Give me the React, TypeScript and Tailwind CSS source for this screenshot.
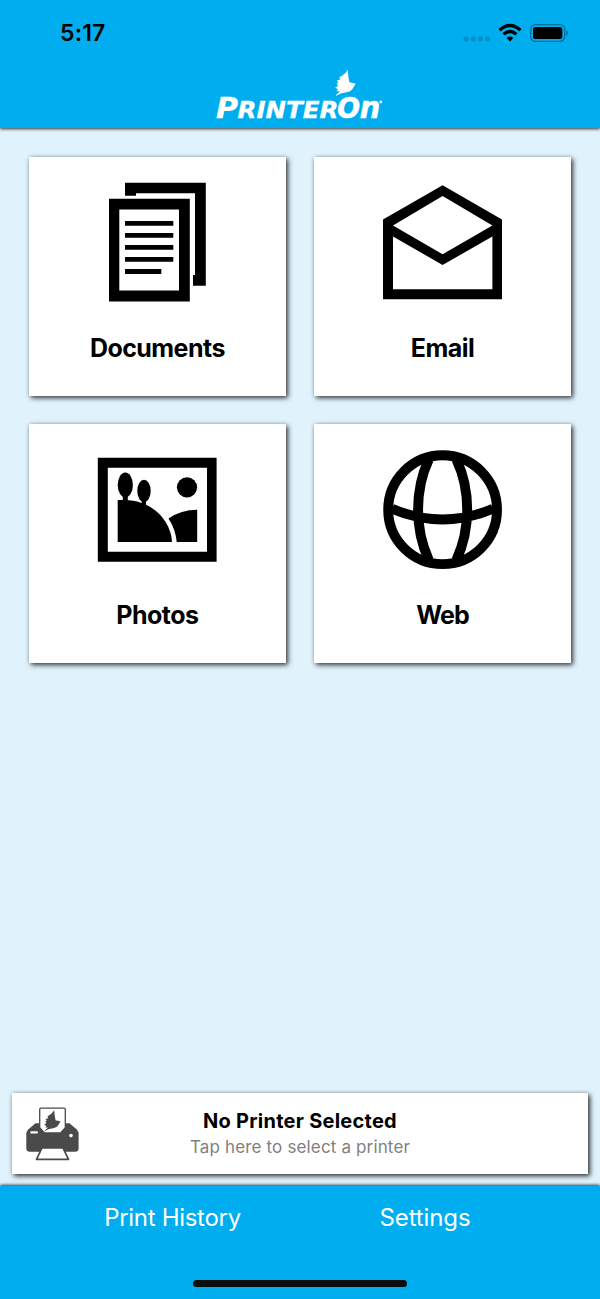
import type { ReactNode } from "react";

const BIRD =
  "M347.8 69.8Q348 76 349.4 82.3L355.8 83.8Q354 86 352.3 89.2Q350.6 91.6 346.5 92.3L341.5 93.2Q338.5 94 335.6 96.2Q336.8 93.6 340 91.6L336.4 91L338.2 89.6L335.2 87.6L338 86L336.8 83.6L338.4 82.4L336.8 80.6L340.2 79.6L339.4 77.2Q345 74.6 347.8 69.8Z";

function StatusBar() {
  return (
    <div className="flex h-[66px] items-center justify-between pl-[60px] pr-[31px]">
      <span className="text-[23px] font-semibold leading-[28px] tracking-[0.2px] text-black">5:17</span>
      <svg className="block" width="108" height="24" viewBox="461 21 108 24">
        <g fill="#008fc8">
          <rect x="463.5" y="36.5" width="5" height="5" rx="1.7" />
          <rect x="470.8" y="36.5" width="5" height="5" rx="1.7" />
          <rect x="478" y="36.5" width="5" height="5" rx="1.7" />
          <rect x="485.2" y="36.5" width="5" height="5" rx="1.7" />
        </g>
        <g fill="none" stroke="#000" strokeWidth="3.3">
          <path d="M499.6 30.2Q510 20.8 520.4 30.2" />
          <path d="M503.6 34.3Q510 28.6 516.4 34.3" />
        </g>
        <path d="M506.6 38Q510 35.2 513.4 38L510 41.4Z" />
        <rect x="530.7" y="24.6" width="34" height="16.8" rx="4.8" fill="none" stroke="#006f9b" strokeWidth="1.2" />
        <rect x="533" y="27" width="29.3" height="12" rx="2.6" />
        <path d="M566.2 30.2Q568 31 568 33Q568 35 566.2 35.8Z" fill="#006f9b" />
      </svg>
    </div>
  );
}

function Logo() {
  return (
    <svg className="block overflow-visible" width="170" height="54" viewBox="215 68 170 54" fill="#fff">
      <g fontFamily="DejaVu Sans, sans-serif" fontWeight="700" fontStyle="italic" stroke="#fff">
        <text x="216" y="117.6" fontSize="27.5" strokeWidth=".3" textLength="22" lengthAdjust="spacingAndGlyphs">P</text>
        <text x="237.5" y="117.6" fontSize="22.3" strokeWidth=".3" textLength="101" lengthAdjust="spacingAndGlyphs">RINTER</text>
        <text x="337.3" y="117.6" fontSize="28" strokeWidth=".7" textLength="22.7" lengthAdjust="spacingAndGlyphs">O</text>
        <text x="359.7" y="117.6" fontSize="30.5" strokeWidth=".5" textLength="20.5" lengthAdjust="spacingAndGlyphs">n</text>
      </g>
      <circle cx="380.8" cy="102" r="1.4" />
      <path d={BIRD} />
    </svg>
  );
}

function DocumentsIcon() {
  return (
    <svg className="block" width="120" height="120" viewBox="97 182 120 120">
      <path d="M125 182.7H205.8V285.8H193V275H195V193.3H136V195.8H125Z" />
      <path fillRule="evenodd" d="M109 198.7H189.8V301.5H109ZM119.3 209.5V290.5H179V209.5Z" />
      <path d="M125 223.4H173.3M125 235.4H173.3M125 247.4H173.3M125 259.4H173.3M125 271.5H161.3" stroke="#000" strokeWidth="4.8" />
    </svg>
  );
}

function EmailIcon() {
  return (
    <svg className="block" width="120" height="120" viewBox="383 182 120 120">
      <path
        fillRule="evenodd"
        d="M383 219.5L442.6 185.3L502 219.5V299.3H383ZM393 225.5L442.6 254.2L492.4 225.5L442.6 196ZM393 236.5V289.3H492.4V236.5L442.6 265Z"
      />
    </svg>
  );
}

function PhotosIcon() {
  return (
    <svg className="block" width="120" height="120" viewBox="97 450 120 120">
      <path fillRule="evenodd" d="M97.8 457.7H216.6V561.7H97.8ZM107.8 467.8V551.8H207V467.8Z" />
      <ellipse cx="125.3" cy="485" rx="7.6" ry="12.4" />
      <ellipse cx="144" cy="491" rx="6.7" ry="11.2" />
      <path d="M122.8 495H127.8V502H122.8ZM141.7 500H146V507H141.7Z" />
      <circle cx="187" cy="487.3" r="10.1" />
      <path d="M117.7 500H125C150 500 171 519 172 542H117.7Z" />
      <path d="M168.5 518.5Q181 509.7 197.2 509.7V542H176.7Q175.5 529 168.5 518.5Z" />
    </svg>
  );
}

function WebIcon() {
  return (
    <svg className="block" width="120" height="120" viewBox="383 450 120 120" fill="none" stroke="#000" strokeWidth="9.9">
      <circle cx="442.6" cy="509.7" r="54.4" />
      <path d="M428.8 459.5C414.5 490 414.5 529 428.8 560M456.4 459.5C470.8 490 470.8 529 456.4 560M392 508.8Q442.5 530.2 493 508.8" />
    </svg>
  );
}

function PrinterIcon() {
  return (
    <svg className="block" width="54" height="54" viewBox="25 1106.7 54 54">
      <path
        fill="#4a4a4a"
        d="M35.5 1123H69.5L76.5 1129Q78.6 1131 78.6 1134V1148Q78.6 1151.5 75 1151.5H30Q26.3 1151.5 26.3 1148V1134Q26.3 1131 28.5 1129Z"
      />
      <path d="M41 1107.8H64Q65.3 1107.8 65.3 1109V1127.5L60.5 1132.6H44.5L39.7 1127.5V1109Q39.7 1107.8 41 1107.8Z" fill="#fff" stroke="#4a4a4a" strokeWidth="1.3" />
      <path d="M42 1147.5H63L68.5 1159H36.5Z" fill="#fff" stroke="#4a4a4a" strokeWidth="1.7" strokeLinejoin="round" />
      <rect x="30.3" y="1131" width="7.6" height="2.2" rx=".8" fill="#fff" />
      <circle cx="71" cy="1135.3" r="1.8" fill="#fff" />
      <path fill="#4a4a4a" transform="translate(-224 1054.2) scale(.8)" d={BIRD} />
    </svg>
  );
}

function Tile({ label, tracking, children }: { label: string; tracking: string; children: ReactNode }) {
  return (
    <button className="flex h-[239px] flex-col items-center bg-white pt-[25.4px] shadow-[2px_2px_5px_0px_rgba(0,0,0,0.75),0_0_4px_rgba(0,0,0,0.15)]">
      {children}
      <span className={`mt-[29.8px] text-[25px] font-bold leading-[32px] text-black ${tracking}`}>{label}</span>
    </button>
  );
}

export default function App() {
  return (
    <div className="flex h-[1299px] w-[600px] flex-col bg-[#e0f3fd] font-[Inter,sans-serif]">
      <header className="h-[128px] bg-[#00aeef] shadow-[0_1px_3px_rgba(0,0,0,0.8)]">
        <StatusBar />
        <div className="flex justify-center pt-[2px]">
          <Logo />
        </div>
      </header>
      <main className="flex flex-1 flex-col justify-between px-[29px] pt-[28.6px]">
        <div className="grid grid-cols-2 gap-x-[28.5px] gap-y-[28.6px]">
          <Tile label="Documents" tracking="tracking-[-0.55px]"><DocumentsIcon /></Tile>
          <Tile label="Email" tracking="tracking-[-0.5px]"><EmailIcon /></Tile>
          <Tile label="Photos" tracking="tracking-[-0.5px]"><PhotosIcon /></Tile>
          <Tile label="Web" tracking="tracking-[-0.9px]"><WebIcon /></Tile>
        </div>
        <button className="-mx-[17px] mb-[12px] grid h-[81px] grid-cols-[54px_1fr_54px] items-center bg-white px-[13px] shadow-[2px_2px_5px_0px_rgba(0,0,0,0.8),0_0_4px_rgba(0,0,0,0.15)]">
          <PrinterIcon />
          <span className="flex flex-col items-center">
            <span className="text-[20px] font-bold leading-[26px] tracking-[0.25px] text-black">No Printer Selected</span>
            <span className="text-[17px] leading-[26px] tracking-[0.15px] text-[#808080]">Tap here to select a printer</span>
          </span>
        </button>
      </main>
      <footer className="flex h-[113px] flex-col items-center justify-between bg-[#00aeef] pb-[12px] pt-[16px] shadow-[0_-1px_3px_rgba(0,0,0,0.8)]">
        <nav className="grid w-[504px] grid-cols-2 text-center text-[24px] leading-[32px] text-white">
          <a className="-ml-[3px] tracking-[-0.3px]">Print History</a>
          <a className="-ml-[2px] tracking-[-0.1px]">Settings</a>
        </nav>
        <div className="h-[7px] w-[214px] rounded-full bg-[#0b0d0e]" />
      </footer>
    </div>
  );
}
